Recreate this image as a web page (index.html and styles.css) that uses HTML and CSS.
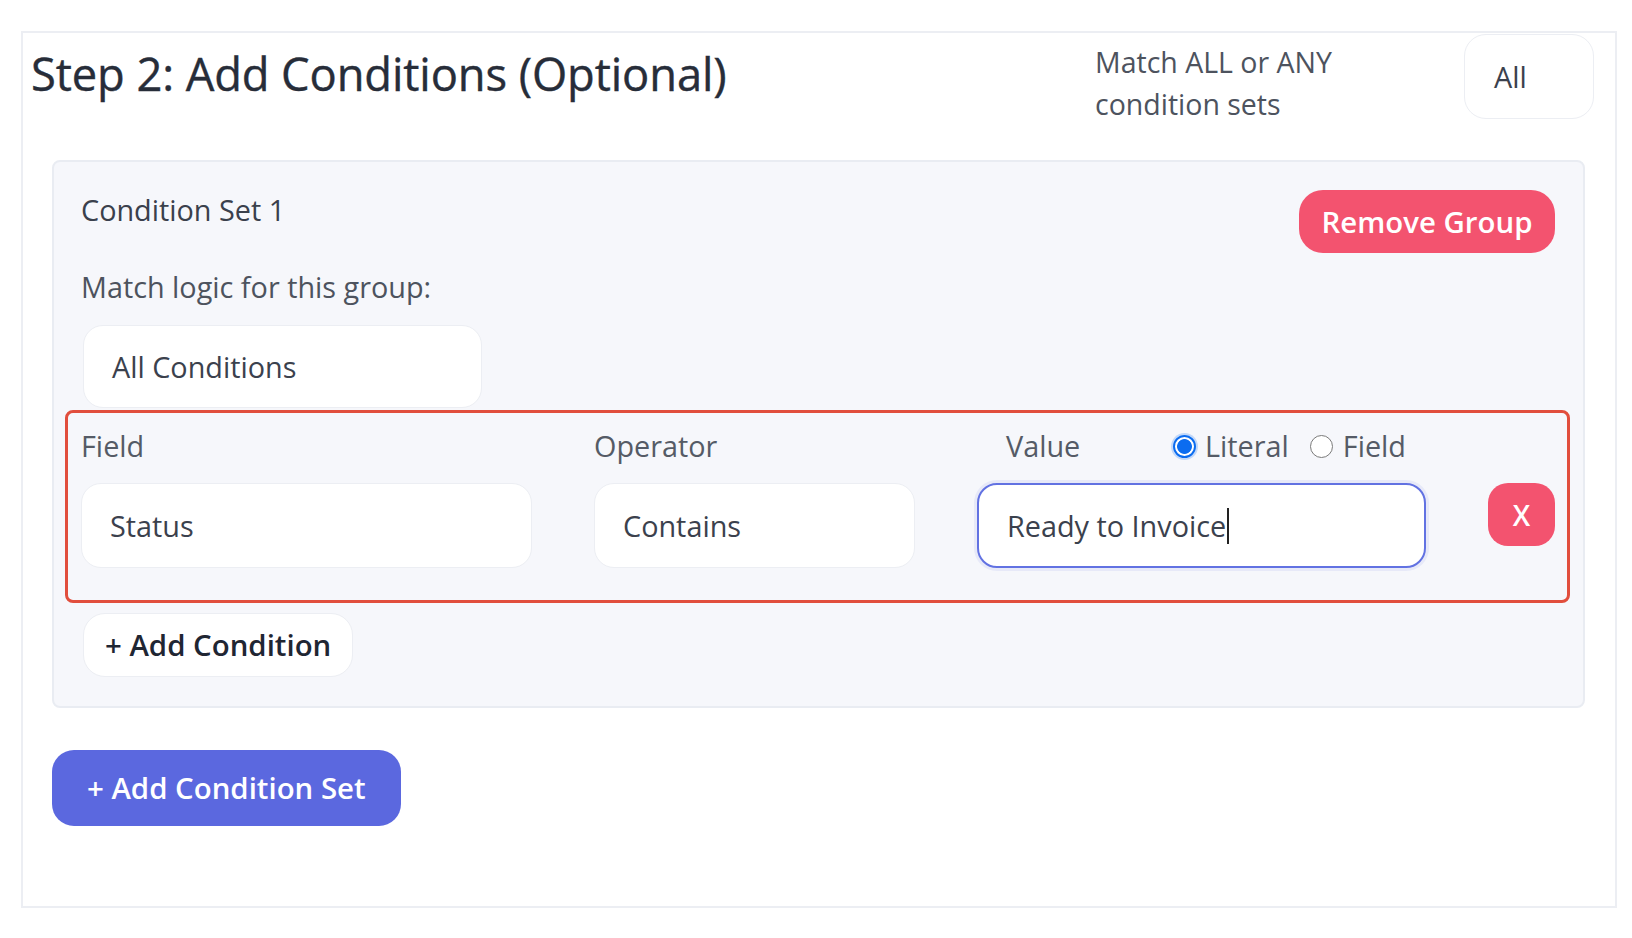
FILE: index.html
```html
<!DOCTYPE html>
<html lang="en">
<head>
<meta charset="utf-8">
<title>Step 2: Add Conditions</title>
<link rel="stylesheet" href="styles.css">
</head>
<body>
<section class="card">
  <header class="card-head">
    <h2 class="step-title">Step 2: Add Conditions (Optional)</h2>
    <div class="set-match">
      <p class="set-match-text">Match ALL or ANY<br>condition sets</p>
      <div class="control control-sets">All</div>
    </div>
  </header>

  <div class="cond-set">
    <div class="cond-set-head">
      <h3 class="cond-set-title">Condition Set 1</h3>
      <button class="btn btn-danger btn-remove">Remove Group</button>
    </div>

    <p class="field-label">Match logic for this group:</p>
    <div class="control control-logic">All Conditions</div>

    <div class="cond-row">
      <div class="col">
        <div class="col-label">Field</div>
        <div class="control">Status</div>
      </div>
      <div class="col">
        <div class="col-label">Operator</div>
        <div class="control">Contains</div>
      </div>
      <div class="col">
        <div class="col-label value-head">
          <span class="value-title">Value</span>
          <span class="radio-opt"><span class="radio radio-on"></span>Literal</span>
          <span class="radio-opt radio-opt-2"><span class="radio"></span>Field</span>
        </div>
        <div class="control control-focus">Ready to Invoice<span class="caret"></span></div>
      </div>
      <div class="col col-del">
        <button class="btn btn-danger btn-x">X</button>
      </div>
    </div>

    <button class="btn btn-light">+ Add Condition</button>
  </div>

  <button class="btn btn-primary">+ Add Condition Set</button>
</section>
</body>
</html>
```

FILE: styles.css
```css
* {
  box-sizing: border-box;
}

html, body {
  margin: 0;
  background: #ffffff;
}

body {
  font-family: "Open Sans", "Noto Sans", sans-serif;
  font-size: 28.8px;
  color: #3b414d;
}

/* outer step card */
.card {
  margin: 31px 0 0 21px;
  width: 1596px;
  height: 877px;
  border: 2px solid #eceef3;
  padding: 1px 21px 0 8px;
}

.card-head {
  display: flex;
  justify-content: space-between;
  align-items: flex-start;
}

.step-title {
  margin: 10px 0 0;
  font-size: 45.3px;
  line-height: 60px;
  font-weight: 500;
  color: #272d39;
  letter-spacing: -0.1px;
  -webkit-text-stroke: 0.4px #272d39;
}

.set-match {
  display: flex;
  align-items: flex-start;
}

.set-match-text {
  margin: 7px 0 0;
  width: 369px;
  font-size: 28.5px;
  line-height: 42px;
  color: #4d535e;
}

/* select-like controls */
.control {
  display: flex;
  align-items: center;
  height: 85px;
  padding: 0 28px;
  background: #ffffff;
  border: 1.5px solid #eceef3;
  border-radius: 20px;
  color: #3b414d;
}

.control-sets {
  width: 130px;
  padding-left: 29px;
  border-radius: 22px;
}

.control-logic {
  width: 399px;
  height: 83px;
  margin-left: 2px;
}

.control-focus {
  border: 2px solid #6272e2;
  box-shadow: 0 0 0 3px rgba(98, 114, 226, 0.10);
}

.caret {
  display: inline-block;
  width: 2px;
  height: 36px;
  margin-left: 1px;
  background: #222222;
}

/* condition set */
.cond-set {
  margin: 35px 9px 0 21px;
  background: #f6f7fb;
  border: 2px solid #e9ecf2;
  border-radius: 8px;
  padding: 28px 28px 29px 27px;
}

.cond-set-head {
  display: flex;
  justify-content: space-between;
  align-items: flex-start;
}

.cond-set-title {
  margin: 0;
  font-size: 28.8px;
  line-height: 40px;
  font-weight: 500;
  color: #3a404c;
}

.field-label {
  margin: 14px 0 18px;
  line-height: 40px;
  color: #4d535e;
}

/* highlighted condition row */
.cond-row {
  display: grid;
  grid-template-columns: 451px 321px 449px 67px;
  column-gap: 62px;
  margin: 2px -15px 0 -16px;
  padding: 13px 12px 32px 13px;
  border: 3px solid #e14e3d;
  border-radius: 8px;
}

.col-label {
  height: 40px;
  line-height: 40px;
  margin-bottom: 17px;
  color: #555b66;
}

.value-head {
  display: flex;
  align-items: center;
  padding-left: 29px;
}

.value-title {
  width: 167px;
}

.radio-opt {
  display: flex;
  align-items: center;
  gap: 9px;
}

.radio-opt-2 {
  margin-left: 21px;
  gap: 10px;
}

.radio {
  width: 23px;
  height: 23px;
  border-radius: 50%;
  border: 1.5px solid #7a7a7a;
  background: #ffffff;
}

.radio-on {
  border: 2px solid #0b6cf0;
  background: radial-gradient(circle, #0b6cf0 0 52%, #ffffff 58%);
  box-shadow: 0 0 0 2px rgba(11, 108, 240, 0.22);
}

.col-del {
  padding-top: 57px;
}

/* buttons */
.btn {
  font-family: inherit;
  font-size: 29.4px;
  font-weight: 600;
  border: none;
  cursor: pointer;
  padding: 0;
}

.btn-danger {
  background: #f3536f;
  color: #ffffff;
}

.btn-remove {
  width: 256px;
  height: 63px;
  border-radius: 24px;
}

.btn-x {
  width: 67px;
  height: 63px;
  border-radius: 20px;
  font-size: 28px;
}

.btn-light {
  display: block;
  margin: 10px 0 0 2px;
  height: 64px;
  padding: 0 21px;
  background: #ffffff;
  border: 1.5px solid #eceef3;
  border-radius: 22px;
  color: #1f2633;
}

.btn-primary {
  display: block;
  margin: 42px 0 0 21px;
  height: 76px;
  padding: 0 35px;
  background: #5b68df;
  color: #ffffff;
  border-radius: 22px;
}
```
